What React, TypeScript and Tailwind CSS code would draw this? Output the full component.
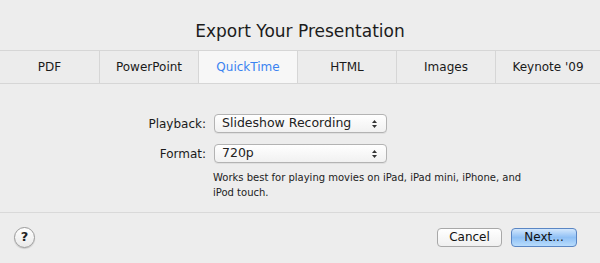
import React from "react";

const tabs = ["PDF", "PowerPoint", "QuickTime", "HTML", "Images", "Keynote '09"];

function Stepper() {
  return (
    <svg width="7" height="10" viewBox="0 0 7 10" className="shrink-0">
      <path d="M1 4 L3.5 1 L6 4 Z" fill="#333" />
      <path d="M1 6 L3.5 9 L6 6 Z" fill="#333" />
    </svg>
  );
}

function Select({ value }: { value: string }) {
  return (
    <div className="w-[173px] h-[19px] rounded-[4px] border border-[#b3b3b3] bg-gradient-to-b from-[#ffffff] to-[#f1f1f1] shadow-[0_1px_0_rgba(0,0,0,0.06)] flex items-center justify-between pl-[7px] pr-[8px] text-[12.5px] text-[#222] leading-none">
      <span>{value}</span>
      <Stepper />
    </div>
  );
}

export default function App() {
  return (
    <div
      className="w-[600px] h-[263px] bg-[#ededed] flex flex-col text-[#1a1a1a] overflow-hidden"
      style={{ fontFamily: '"Lucida Grande", "DejaVu Sans", sans-serif' }}
    >
      <div className="h-[50px] flex items-center justify-center pt-[13px] text-[17px] text-[#1c1c1c]">
        Export Your Presentation
      </div>
      <div className="h-[34px] flex border-t border-b border-[#d6d6d6] bg-[#ececec]">
        {tabs.map((t, i) => (
          <div
            key={t}
            className={
              "flex items-center justify-center text-[12px] " +
              (i === tabs.length - 1 ? "flex-1 " : "w-[99px] ") +
              (i > 0 ? "border-l border-[#d6d6d6] " : "") +
              (t === "QuickTime" ? "bg-[#f7f7f7] text-[#3a83f1]" : "text-[#1a1a1a]")
            }
          >
            {t}
          </div>
        ))}
      </div>
      <div className="h-[129px] flex flex-col pt-[30px] border-b border-[#d9d9d9]">
        <div className="flex items-center h-[19px]">
          <div className="w-[214px] text-right pr-[8px] text-[12px]">Playback:</div>
          <Select value="Slideshow Recording" />
        </div>
        <div className="flex items-center h-[19px] mt-[11px]">
          <div className="w-[214px] text-right pr-[8px] text-[12px]">Format:</div>
          <Select value="720p" />
        </div>
        <div className="ml-[213px] mt-[7px] w-[330px] text-[10px] leading-[15px] text-[#222]">
          Works best for playing movies on iPad, iPad mini, iPhone, and iPod touch.
        </div>
      </div>
      <div className="flex-1 flex items-center justify-between pl-[14px] pr-[23px] pb-[2px]">
        <div className="w-[21px] h-[21px] rounded-full border border-[#9a9a9a] bg-gradient-to-b from-[#ffffff] to-[#e9e9e9] flex items-center justify-center text-[13px] font-bold text-[#222] shadow-[0_1px_1px_rgba(0,0,0,0.15)]">
          ?
        </div>
        <div className="flex gap-[9px]">
          <div className="w-[65px] h-[19px] rounded-[4px] border border-[#a8a8a8] bg-gradient-to-b from-[#ffffff] to-[#f0f0f0] flex items-center justify-center text-[12px] text-[#111]">
            Cancel
          </div>
          <div className="w-[66px] h-[19px] rounded-[4px] border border-[#5a86c4] bg-gradient-to-b from-[#d3e7fc] via-[#8fc0f5] to-[#b8dcfc] flex items-center justify-center text-[12px] text-[#111]">
            Next...
          </div>
        </div>
      </div>
    </div>
  );
}
